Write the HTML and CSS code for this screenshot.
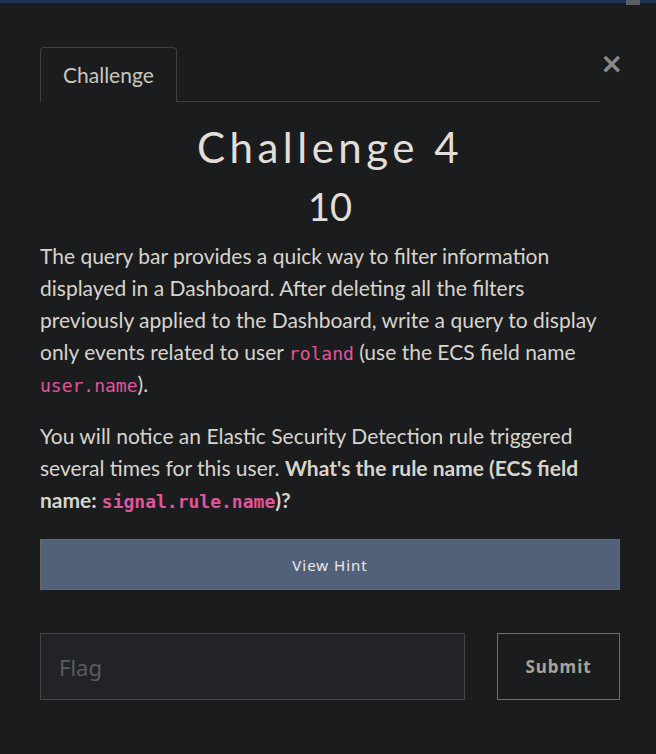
FILE: index.html
```html
<!DOCTYPE html>
<html>
<head>
<meta charset="utf-8">
<link rel="stylesheet" href="styles.css">
</head>
<body>
<div class="topbar"><span class="scroll"></span></div>
<div class="modal">
  <div class="header">
    <nav class="tabs">
      <div class="tab">Challenge</div>
    </nav>
    <button class="close" aria-label="Close">&times;</button>
  </div>
  <h2 class="title">Challenge 4</h2>
  <h3 class="value">10</h3>
  <div class="desc">
    <p>The query bar provides a quick way to filter information displayed in a Dashboard. After deleting all the filters previously applied to the Dashboard, write a query to display only events related to user <code>roland</code> (use the ECS field name <code>user.name</code>).</p>
    <p>You will notice an Elastic Security Detection rule triggered several times for this user. <strong>What's the rule name (ECS field name: <code>signal.rule.name</code>)?</strong></p>
  </div>
  <button class="hint">View Hint</button>
  <div class="submit-row">
    <input class="flag" type="text" placeholder="Flag">
    <button class="submit">Submit</button>
  </div>
</div>
</body>
</html>
```
FILE: styles.css
```css
html, body {
  margin: 0;
  padding: 0;
  background: #1b1c1e;
}
body {
  font-family: "Lato", "Liberation Sans", sans-serif;
  color: #d8d4cc;
}
.topbar {
  height: 3px;
  background: #1f3352;
  display: flex;
  justify-content: flex-end;
  padding-right: 16px;
}
.scroll {
  width: 14px;
  height: 5px;
  background: #5a5f66;
}
.modal {
  padding: 44px 36px 0 40px;
}
.header {
  display: flex;
  align-items: flex-start;
}
.tabs {
  flex: 1;
  border-bottom: 1px solid #3f4042;
  display: flex;
}
.tab {
  border: 1px solid #3f4042;
  border-bottom: none;
  border-radius: 4px 4px 0 0;
  padding: 0 22px;
  height: 53px;
  line-height: 53px;
  font-size: 21px;
  color: #cbc7bf;
  margin-bottom: -1px;
  background: #1b1c1e;
  padding-bottom: 1px;
}
.close {
  width: 20px;
  background: none;
  border: none;
  padding: 0;
  margin-top: 5px;
  color: #8a8a8a;
  font-family: "DejaVu Sans", sans-serif;
  font-weight: bold;
  font-size: 28px;
  line-height: 24px;
  text-align: right;
}
.title {
  margin: 20px 0 0;
  text-align: center;
  font-family: "Lato", sans-serif;
  font-weight: 400;
  font-size: 42px;
  letter-spacing: 4.5px;
  line-height: 50px;
  color: #e2dfd9;
}
.value {
  margin: 12px 0 0;
  text-align: center;
  font-weight: 400;
  font-size: 38px;
  line-height: 44px;
  color: #e2dfd9;
}
.desc {
  margin-top: 12px;
}
.desc p {
  margin: 0 0 20px;
  font-size: 21px;
  line-height: 32px;
}
.desc p:last-child {
  margin-bottom: 23px;
}
.desc strong {
  font-weight: 700;
}
code {
  font-family: "DejaVu Sans Mono", monospace;
  font-size: 18px;
  line-height: 1;
  color: #e2559a;
}
.hint {
  display: block;
  width: 100%;
  height: 51px;
  background: #52617a;
  border: 1px solid #6a6a60;
  color: #eceae6;
  font-family: "Noto Sans", sans-serif;
  font-size: 15px;
  letter-spacing: 1px;
}
.submit-row {
  margin-top: 43px;
  display: flex;
  gap: 32px;
}
.flag {
  flex: 1;
  height: 67px;
  box-sizing: border-box;
  background: #222326;
  border: 1px solid #434446;
  padding: 0 18px;
  font-family: "Noto Sans", sans-serif;
  font-size: 22px;
  color: #ccc;
  outline: none;
}
.flag::placeholder {
  color: #5b5c5e;
}
.submit {
  width: 123px;
  height: 67px;
  box-sizing: border-box;
  background: #1b1c1e;
  border: 1px solid #786c60;
  color: #aaa398;
  font-family: "Noto Sans", sans-serif;
  font-weight: 700;
  font-size: 17px;
  letter-spacing: 1px;
}
```
